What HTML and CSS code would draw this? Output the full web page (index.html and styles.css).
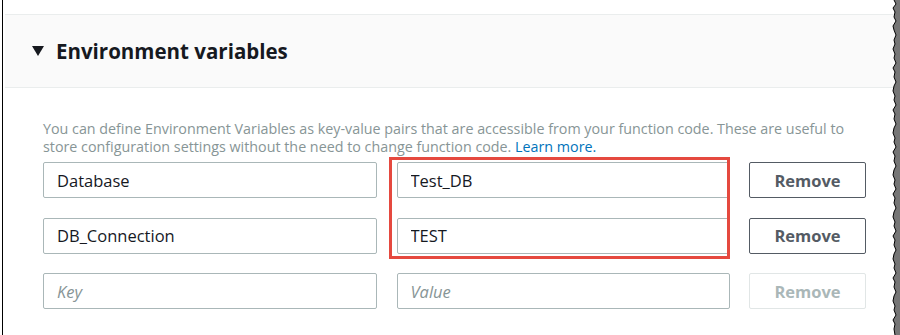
FILE: index.html
```html
<!DOCTYPE html>
<html lang="en">
<head>
    <meta charset="UTF-8">
    <meta name="viewport" content="width=device-width, initial-scale=1.0">
    <title>Environment variables</title>
    <link rel="stylesheet" href="styles.css">
</head>
<body>

<div class="frame">
    <div class="panel">
        <div class="panel-head">
            <span class="caret"></span>
            <h2>Environment variables</h2>
        </div>

        <div class="panel-body">
            <p class="hint">You can define Environment Variables as key-value pairs that are accessible from your function code. These are useful to<br>
                store configuration settings without the need to change function code. <a href="#">Learn more.</a></p>

            <div class="vars">
                <input type="text" class="field" value="Database">
                <input type="text" class="field" value="Test_DB">
                <button type="button" class="remove-button">Remove</button>

                <input type="text" class="field" value="DB_Connection">
                <input type="text" class="field" value="TEST">
                <button type="button" class="remove-button">Remove</button>

                <input type="text" class="field" placeholder="Key">
                <input type="text" class="field" placeholder="Value">
                <button type="button" class="remove-button" disabled>Remove</button>

                <!-- callout drawn over the value column -->
                <div class="highlight"></div>
            </div>
        </div>
    </div>

    <svg class="torn-edge" width="10" height="335" viewBox="0 0 10 335">
        <polygon fill="#767676" points="4,0 6,4 3,8 5,12 4,17 6,21 3,26 4,30 6,35 4,40 5,44 3,49 5,54 4,58 6,63 3,68 5,72 4,77 6,82 4,86 3,91 5,96 4,100 6,105 3,110 5,114 4,119 6,124 4,128 3,133 5,138 4,142 6,147 3,152 5,156 4,161 6,166 4,170 3,175 5,180 4,184 6,189 3,194 5,198 4,203 6,208 4,212 3,217 5,222 4,226 6,231 3,236 5,240 4,245 6,250 4,254 3,259 5,264 4,268 6,273 3,278 5,282 4,287 6,292 4,296 3,301 5,306 4,310 6,315 3,320 5,324 4,329 5,335 10,335 10,0"/>
        <polyline fill="none" stroke="#000" stroke-width="1" points="4,0 6,4 3,8 5,12 4,17 6,21 3,26 4,30 6,35 4,40 5,44 3,49 5,54 4,58 6,63 3,68 5,72 4,77 6,82 4,86 3,91 5,96 4,100 6,105 3,110 5,114 4,119 6,124 4,128 3,133 5,138 4,142 6,147 3,152 5,156 4,161 6,166 4,170 3,175 5,180 4,184 6,189 3,194 5,198 4,203 6,208 4,212 3,217 5,222 4,226 6,231 3,236 5,240 4,245 6,250 4,254 3,259 5,264 4,268 6,273 3,278 5,282 4,287 6,292 4,296 3,301 5,306 4,310 6,315 3,320 5,324 4,329 5,335"/>
    </svg>
</div>

</body>
</html>
```

FILE: styles.css
```css
body {
    margin: 0;
    background-color: #fff;
    font-family: "Open Sans", Arial, sans-serif;
    color: #16191f;
}

.frame {
    position: relative;
    height: 335px;
    margin-left: 2px;
    border-left: 1px solid #000;
    padding: 14px 0 0 2px;
    box-sizing: border-box;
    overflow: hidden;
}

.panel {
    border-top: 1px solid #eaeded;
}

.panel-head {
    display: flex;
    align-items: center;
    height: 72px;
    padding-left: 27px;
    background-color: #fafafa;
    border-bottom: 1px solid #eaeded;
}

.caret {
    width: 0;
    height: 0;
    border-left: 6px solid transparent;
    border-right: 6px solid transparent;
    border-top: 10px solid #16191f;
    margin-right: 12px;
}

.panel-head h2 {
    margin: 0;
    font-size: 20.5px;
    font-weight: bold;
    color: #16191f;
}

.panel-body {
    padding: 32px 0 0 38px;
}

.hint {
    margin: 0 0 6px 0;
    font-size: 14.3px;
    line-height: 18px;
    color: #879596;
    white-space: nowrap;
}

.hint a {
    color: #0073bb;
    text-decoration: none;
}

.vars {
    position: relative;
    display: grid;
    grid-template-columns: 334px 333px 117px;
    column-gap: 19.5px;
    row-gap: 19.5px;
}

.field {
    height: 36px;
    padding: 0 13px;
    border: 1px solid #aab7b8;
    border-radius: 2px;
    box-sizing: border-box;
    font-family: inherit;
    font-size: 16.5px;
    color: #16191f;
    background-color: #fff;
}

.field::placeholder {
    font-style: italic;
    color: #879596;
}

.remove-button {
    height: 36px;
    border: 1px solid #545b64;
    border-radius: 2px;
    background-color: #fff;
    font-family: inherit;
    font-size: 16.5px;
    font-weight: bold;
    color: #545b64;
    cursor: pointer;
}

.remove-button:disabled {
    border-color: #e1e6e6;
    color: #aab7b8;
    cursor: default;
}

.highlight {
    position: absolute;
    left: 346px;
    top: -5px;
    width: 341px;
    height: 102px;
    border: 3px solid #e5493f;
    box-sizing: border-box;
    pointer-events: none;
}

.torn-edge {
    position: absolute;
    top: 0;
    right: 0;
}
```
